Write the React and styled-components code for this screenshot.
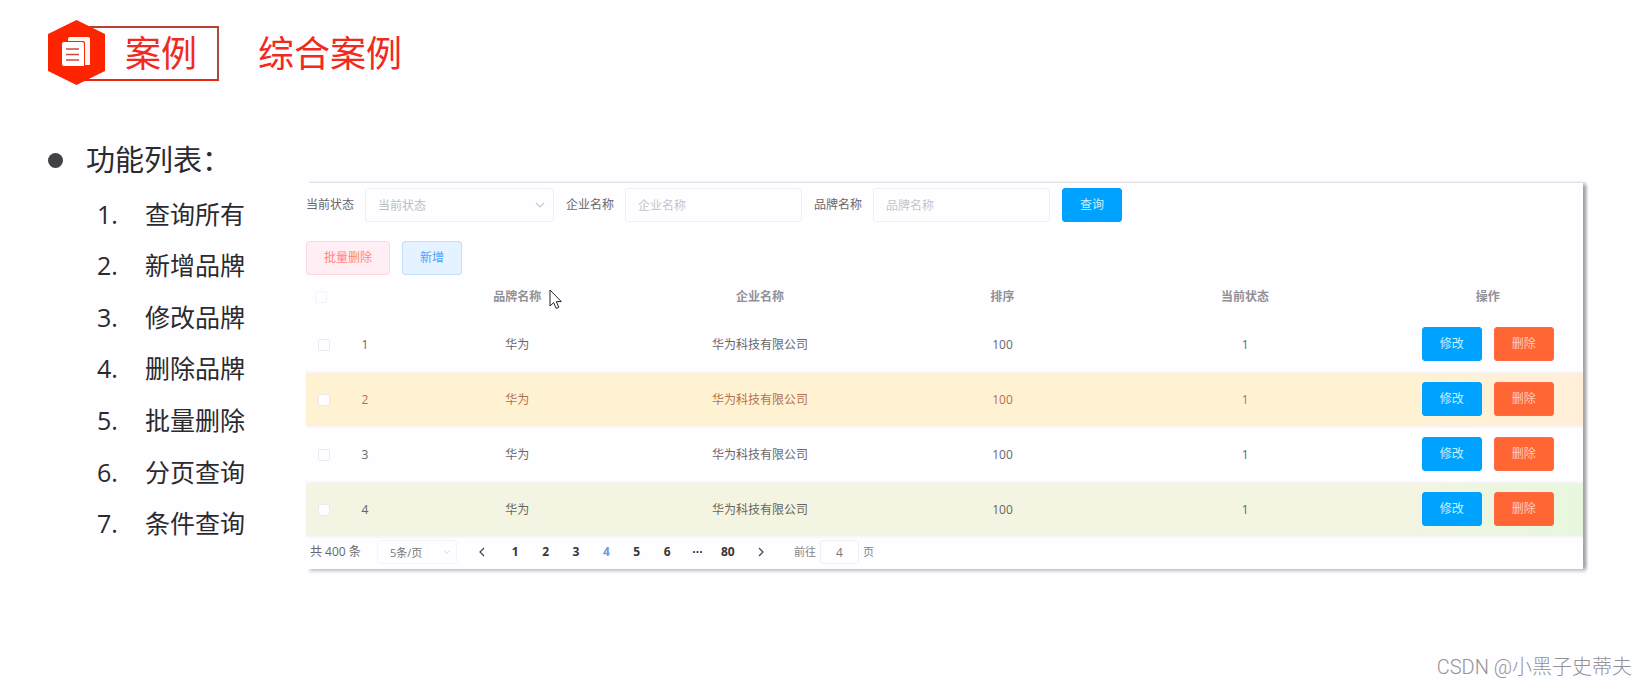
import React from "react";
import styled, { createGlobalStyle } from "styled-components";

const features = [
  "查询所有",
  "新增品牌",
  "修改品牌",
  "删除品牌",
  "批量删除",
  "分页查询",
  "条件查询",
];

const brands = [
  { id: 1, tone: "plain" },
  { id: 2, tone: "warning" },
  { id: 3, tone: "plain" },
  { id: 4, tone: "success" },
].map((row) => ({
  ...row,
  brandName: "华为",
  companyName: "华为科技有限公司",
  ordered: 100,
  status: 1,
}));

const pages = ["1", "2", "3", "4", "5", "6", "···", "80"];

function Chevron({ size, d = "M2 4 L6 8 L10 4" }) {
  return (
    <svg width={size} height={size} viewBox="0 0 12 12" fill="none">
      <path d={d} stroke="currentColor" strokeWidth="1.2" />
    </svg>
  );
}

function HexIcon() {
  return (
    <HexSvg width="57" height="66" viewBox="0 0 57 66">
      <path d="M28.5 0 L57 14 V51 L28.5 65 L0 51 V14 Z" fill="#ff2400" />
      <path d="M22 17 H40 Q42 17 42 19 V45 H37 V23 Q37 21 35 21 H20 V19 Q20 17 22 17 Z" fill="#fff6ee" />
      <path d="M16 22 H34 Q36 22 36 24 V46 H16 Q14 46 14 44 V24 Q14 22 16 22 Z" fill="#fff" />
      <path d="M18 29 H31 M18 34.5 H31 M18 40 H31" stroke="#d0493c" strokeWidth="1.6" />
    </HexSvg>
  );
}

function App() {
  return (
    <Page>
      <GlobalStyle />
      <Header>
        <Badge>
          <HexIcon />
          <BadgeLabel>案例</BadgeLabel>
        </Badge>
        <Title>综合案例</Title>
      </Header>
      <Content>
        <Aside>
          <AsideTitle>
            <Dot />
            功能列表：
          </AsideTitle>
          <FeatureList>
            {features.map((text, i) => (
              <Feature key={text}>
                <FeatureNumber>{i + 1}.</FeatureNumber>
                {text}
              </Feature>
            ))}
          </FeatureList>
        </Aside>
        <Panel>
          <SearchForm onSubmit={(e) => e.preventDefault()}>
            <Field>
              <label htmlFor="status">当前状态</label>
              <SelectBox>
                <Select id="status">
                  <option>当前状态</option>
                </Select>
                <Chevron size={12} />
              </SelectBox>
            </Field>
            <Field>
              <label htmlFor="company">企业名称</label>
              <TextInput id="company" placeholder="企业名称" />
            </Field>
            <Field>
              <label htmlFor="brand">品牌名称</label>
              <TextInput id="brand" placeholder="品牌名称" />
            </Field>
            <Button>查询</Button>
          </SearchForm>
          <Actions>
            <Button type="button" $kind="dangerPlain">
              批量删除
            </Button>
            <Button type="button" $kind="primaryPlain">
              新增
            </Button>
          </Actions>
          <Table>
            <colgroup>
              <CheckCol />
              <IndexCol />
              <col span="5" />
            </colgroup>
            <thead>
              <tr>
                <Th $start>
                  <Checkbox type="checkbox" aria-label="全选" $faint />
                </Th>
                <Th />
                <Th>
                  <Hovered>
                    品牌名称
                    <Cursor width="14" height="21" viewBox="0 0 14 21">
                      <path
                        d="M1 1 V17 L4.7 13.6 L7.2 19.4 L9.8 18.3 L7.3 12.6 H12.3 Z"
                        fill="#fff"
                        stroke="#222"
                      />
                    </Cursor>
                  </Hovered>
                </Th>
                <Th>企业名称</Th>
                <Th>排序</Th>
                <Th>当前状态</Th>
                <Th>操作</Th>
              </tr>
            </thead>
            <tbody>
              {brands.map((row) => (
                <Row key={row.id} $tone={row.tone}>
                  <Td>
                    <Checkbox type="checkbox" aria-label={`选择 ${row.id}`} />
                  </Td>
                  <Td $index>{row.id}</Td>
                  <Td>{row.brandName}</Td>
                  <Td>{row.companyName}</Td>
                  <Td>{row.ordered}</Td>
                  <Td>{row.status}</Td>
                  <Td>
                    <RowButtons>
                      <Button type="button">修改</Button>
                      <Button type="button" $kind="danger">
                        删除
                      </Button>
                    </RowButtons>
                  </Td>
                </Row>
              ))}
            </tbody>
          </Table>
          <Pagination>
            <Total>共 400 条</Total>
            <SelectBox $small>
              <Select $small aria-label="每页条数">
                <option>5条/页</option>
              </Select>
              <Chevron size={8} />
            </SelectBox>
            <Arrow aria-label="上一页">
              <Chevron size={12} d="M8 2 L4 6 L8 10" />
            </Arrow>
            <Pager>
              {pages.map((p) => (
                <PageButton key={p} $active={p === "4"}>
                  {p}
                </PageButton>
              ))}
            </Pager>
            <Arrow aria-label="下一页">
              <Chevron size={12} d="M4 2 L8 6 L4 10" />
            </Arrow>
            <Jump>
              前往
              <JumpInput defaultValue="4" />页
            </Jump>
          </Pagination>
        </Panel>
      </Content>
      <Footer>CSDN @小黑子史蒂夫</Footer>
    </Page>
  );
}

export default App;

const GlobalStyle = createGlobalStyle`
  * {
    box-sizing: border-box;
  }
  body {
    margin: 0;
    background: #fefdff;
  }
  body, button, input, select {
    font-family: "Open Sans", "Noto Sans CJK SC", sans-serif;
  }
`;

const Page = styled.div`
  display: flex;
  flex-direction: column;
  min-height: 100vh;
  overflow: hidden;
`;

const Header = styled.header`
  display: flex;
  align-items: center;
  gap: 39px;
  padding: 20px 48px 0;
  font-size: 36px;
  line-height: 50px;
  color: #f02a1c;
`;
const Badge = styled.div`
  display: flex;
  align-items: center;
`;
const HexSvg = styled.svg`
  z-index: 1;
`;
const BadgeLabel = styled.span`
  margin-left: -28px;
  padding: 1px 20px 0 46px;
  border: 2px solid;
  border-color: #b5432f #a84f42 #e8250f;
`;
const Title = styled.h1`
  margin: 0;
  padding-top: 2px;
  font-size: 36px;
  font-weight: 400;
`;

const Content = styled.main`
  display: grid;
  grid-template-columns: 258px minmax(0, 1fr);
  align-items: start;
  padding: 54px 62px 0 48px;
`;
const Aside = styled.aside`
  color: #2b2a2e;
`;
const AsideTitle = styled.h2`
  display: flex;
  align-items: center;
  gap: 23px;
  margin: 0;
  font-size: 29px;
  font-weight: 400;
  line-height: 40px;
  white-space: nowrap;
`;
const Dot = styled.span`
  width: 15px;
  height: 15px;
  border-radius: 50%;
  background: #424145;
`;
const FeatureList = styled.ol`
  display: grid;
  grid-auto-rows: 1fr;
  height: 361px;
  margin: 8px 0 0;
  padding: 0 0 0 49px;
  list-style: none;
`;
const Feature = styled.li`
  display: flex;
  align-items: center;
  font-size: 25px;
  line-height: 36px;
`;
const FeatureNumber = styled.span`
  width: 48px;
`;

const Panel = styled.section`
  margin-top: 43px;
  padding-top: 5px;
  overflow: hidden;
  background: #fefdff;
  box-shadow: 4px 1px 3px -1px #a2a2a6, 3px -1px 2px #dcdbde, 3px 3px 3px #dddcdf;
  font-size: 12px;
  line-height: 18px;
  color: #68676b;
`;
const SearchForm = styled.form`
  display: flex;
  gap: 12px;
`;
const Field = styled.div`
  display: flex;
  align-items: center;
  gap: 11px;
`;
const SelectBox = styled.div`
  display: grid;
  align-items: center;
  width: ${(props) => (props.$small ? "80px" : "189px")};
  color: #c9c8ce;

  > * {
    grid-area: 1 / 1;
  }
  svg {
    justify-self: end;
    margin-right: ${(props) => (props.$small ? "6px" : "8px")};
    pointer-events: none;
  }
`;
const Select = styled.select`
  appearance: none;
  width: 100%;
  height: ${(props) => (props.$small ? "24px" : "34px")};
  padding: 0 12px;
  border: 1px solid ${(props) => (props.$small ? "#f5f4f8" : "#f0eff4")};
  border-radius: 3px;
  background: #fefdff;
  font-size: ${(props) => (props.$small ? "11px" : "12px")};
  color: ${(props) => (props.$small ? "#77767a" : "#bdbcc0")};
`;
const TextInput = styled.input`
  width: 177px;
  height: 34px;
  padding: 0 12px;
  border: 1px solid #f0eff4;
  border-radius: 3px;
  background: #fefdff;
  font-size: 12px;

  &::placeholder {
    color: #c6c5c9;
  }
`;

const kinds = {
  primary: "background: #00a2ff; color: #c4f1ff; border-color: #00a2ff;",
  danger: "background: #ff6634; color: #ffcdb8; border-color: #ff6a45;",
  primaryPlain: "background: #e4f3ff; color: #4da3ff; border-color: #bfdfff;",
  dangerPlain: "background: #ffeef4; color: #ff8585; border-color: #ffd6de;",
};
const Button = styled.button`
  height: 34px;
  padding: 0 17px;
  border: 1px solid;
  border-radius: 3px;
  font-size: 12px;
  line-height: 18px;
  ${(props) => kinds[props.$kind || "primary"]}
`;
const Actions = styled.div`
  display: flex;
  gap: 12px;
  margin-top: 19px;
`;

/* the last column runs past the panel edge and is clipped there */
const Table = styled.table`
  width: calc(100% + 26px);
  table-layout: fixed;
  border-spacing: 0;
  text-align: center;
`;
const CheckCol = styled.col`
  width: 36px;
`;
const IndexCol = styled.col`
  width: 54px;
`;
const Th = styled.th`
  height: 43px;
  padding: 0 ${(props) => (props.$start ? "6px" : 0)} 0 0;
  color: #929195;
  font-weight: 700;
`;
const Hovered = styled.span`
  position: relative;
`;
const Cursor = styled.svg`
  position: absolute;
  left: 56px;
  top: 1px;
`;
const tones = {
  plain: "",
  warning: `
    background: linear-gradient(90deg, #fff2d3 85%, #ffefda);
    color: #b3714f;
  `,
  success: `
    background: linear-gradient(90deg, #f4f4e2 84%, #edf6e0 90%, #e6f8dc);
    color: #66665c;
  `,
};
const Row = styled.tr`
  ${(props) => tones[props.$tone]}
`;
const Td = styled.td`
  height: 55px;
  padding: ${(props) => (props.$index ? "0 8px 0 0" : 0)};
  border-bottom: 2px solid #f9f6fa;
`;
const Checkbox = styled.input`
  appearance: none;
  display: block;
  width: 12px;
  height: 12px;
  margin: 0 auto;
  border: 1px solid ${(props) => (props.$faint ? "#f4f3f6" : "#eceaf0")};
  border-radius: 2px;
  background: #fffdff;
`;
const RowButtons = styled.div`
  display: flex;
  justify-content: center;
  gap: 12px;
  padding-bottom: 2px;
`;

const Pagination = styled.nav`
  display: flex;
  align-items: center;
  padding: 2px 4px 5px;
  font-size: 11px;
`;
const Total = styled.span`
  width: 67px;
  font-size: 12px;
`;
const Arrow = styled.button`
  display: flex;
  justify-content: center;
  width: 36px;
  padding: 0;
  border: 0;
  background: none;
  color: #444347;

  ${SelectBox} + & {
    margin-left: 7px;
  }
`;
const Pager = styled.div`
  display: grid;
  grid-template-columns: repeat(8, 1fr);
  width: 243px;
`;
const PageButton = styled.button`
  padding: 0;
  border: 0;
  background: none;
  font-size: 12px;
  font-weight: 700;
  line-height: 24px;
  color: ${(props) => (props.$active ? "#6f98e2" : "#36353a")};
`;
const Jump = styled.label`
  display: flex;
  align-items: center;
  gap: 4px;
  margin-left: 15px;
  color: #858488;
`;
const JumpInput = styled.input`
  width: 39px;
  height: 24px;
  padding: 0;
  border: 1px solid #f0eff6;
  border-radius: 3px;
  background: #fefdff;
  font-size: 12px;
  text-align: center;
  color: #77767a;
`;

const Footer = styled.footer`
  margin-top: auto;
  padding: 0 13px 5px;
  font-family: Roboto, "Noto Sans CJK SC", sans-serif;
  font-size: 20px;
  font-weight: 300;
  line-height: 28px;
  text-align: right;
  color: #939296;
`;
